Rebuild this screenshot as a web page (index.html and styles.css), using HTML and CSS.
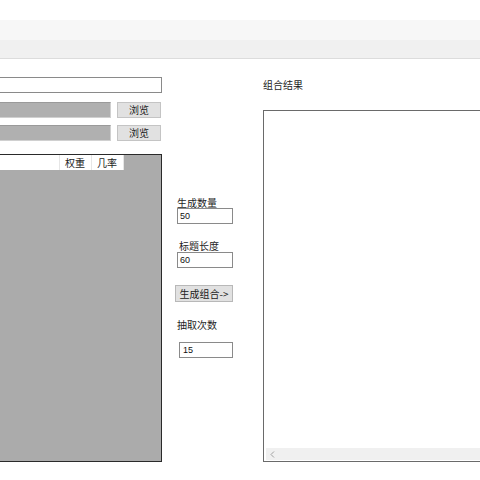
FILE: index.html
```html
<!DOCTYPE html>
<html lang="zh">
<head>
<meta charset="utf-8">
<title>组合</title>
<link rel="stylesheet" href="styles.css">
</head>
<body>
<div class="topgap"></div>
<div class="toolbar"><div class="band-a"></div><div class="band-b"></div></div>
<div class="main">
  <div class="col-left">
    <div class="textbox"></div>
    <div class="filerow">
      <div class="filefield"></div>
      <div class="btn browse">浏览</div>
    </div>
    <div class="filerow second">
      <div class="filefield"></div>
      <div class="btn browse">浏览</div>
    </div>
    <div class="listbox">
      <div class="listhead">
        <div class="hcell first"></div>
        <div class="hcell w">权重</div>
        <div class="hcell w">几率</div>
      </div>
    </div>
  </div>
  <div class="col-mid">
    <div class="lbl l1">生成数量</div>
    <div class="num n1">50</div>
    <div class="lbl l2">标题长度</div>
    <div class="num n2">60</div>
    <div class="btn gen">生成组合-&gt;</div>
    <div class="lbl l3">抽取次数</div>
    <div class="num n3">15</div>
  </div>
  <div class="col-right">
    <div class="lbl r1">组合结果</div>
    <div class="result">
      <div class="result-body"></div>
      <div class="hscroll">
        <svg class="arrow" width="5" height="7" viewBox="0 0 5 7"><path d="M4 0.5 L1 3.5 L4 6.5" fill="none" stroke="#a0a0a0" stroke-width="1"/></svg>
      </div>
    </div>
  </div>
</div>
</body>
</html>
```
FILE: styles.css
```css
html, body {
  margin: 0;
  padding: 0;
  background: #ffffff;
  overflow: hidden;
  width: 480px;
  height: 480px;
}
body {
  font-family: "Noto Sans CJK SC", "Noto Sans", sans-serif;
  font-size: 10px;
  color: #1e1e1e;
}
.topgap { height: 20px; background: #ffffff; }
.toolbar { height: 38px; border-bottom: 1px solid #dcdcdc; }
.band-a { height: 20px; background: #f7f7f7; }
.band-b { height: 18px; background: #f0f0f0; }

.main { display: flex; align-items: flex-start; }

.col-left {
  width: 162px;
  flex: none;
  padding-top: 18px;
}
.textbox {
  height: 16px;
  box-sizing: border-box;
  border: 1px solid #8a8a8a;
  border-left: none;
  background: #fff;
}
.filerow { display: flex; gap: 6px; margin-top: 9px; height: 16px; }
.filerow.second { margin-top: 7px; }
.filefield {
  width: 111px;
  box-sizing: border-box;
  border-top: 1px solid #9a9a9a;
  border-right: 1px solid #d0d0d0;
  border-bottom: 1px solid #d0d0d0;
  background: #b0b0b0;
}
.btn {
  box-sizing: border-box;
  background: #e1e1e1;
  border: 1px solid #c4c4c4;
  display: flex;
  align-items: center;
  justify-content: center;
  line-height: 1;
  color: #222;
}
.browse { width: 44px; height: 16px; }
.listbox {
  margin-top: 13px;
  height: 308px;
  box-sizing: border-box;
  border: 1px solid #2a2a2a;
  border-left: none;
  background: #ababab;
}
.listhead { display: flex; height: 15px; width: 124px; background: #fff; }
.hcell {
  box-sizing: border-box;
  border-right: 1px solid #e6e6e6;
  line-height: 15px;
  padding-left: 5px;
}
.hcell.first { width: 60px; }
.hcell.w { width: 32px; }

.col-mid {
  margin-left: 13px;
  width: 58px;
  flex: none;
  padding-top: 138px;
}
.lbl { line-height: 11px; white-space: nowrap; }
.l1 { margin-left: 2px; }
.l2 { margin-left: 4px; margin-top: 16px; }
.l3 { margin-left: 2px; margin-top: 17px; }
.num {
  height: 16px;
  box-sizing: border-box;
  border: 1px solid #8a8a8a;
  background: #fff;
  font-family: "Liberation Sans", Arial, sans-serif;
  font-size: 9px;
  line-height: 14px;
  padding-left: 2px;
  color: #111;
}
.n1 { margin-left: 2px; width: 56px; }
.n2 { margin-left: 2px; width: 56px; margin-top: 1px; }
.n3 { margin-left: 4px; width: 54px; margin-top: 12px; padding-left: 3px; }
.gen { width: 58px; height: 17px; margin-top: 17px; white-space: nowrap; border-color: #b8b8b8; }

.col-right {
  margin-left: 30px;
  flex: 1;
  min-width: 0;
  padding-top: 20px;
}
.result {
  margin-top: 20px;
  height: 352px;
  box-sizing: border-box;
  border: 1px solid #6a6a6a;
  border-right: none;
  background: #fff;
  display: flex;
  flex-direction: column;
}
.result-body { flex: 1; }
.hscroll {
  height: 12px;
  margin-bottom: 1px;
  margin-left: 2px;
  background: #f0f0f0;
  display: flex;
  align-items: center;
  padding-left: 4px;
}
.arrow { display: block; }
```
